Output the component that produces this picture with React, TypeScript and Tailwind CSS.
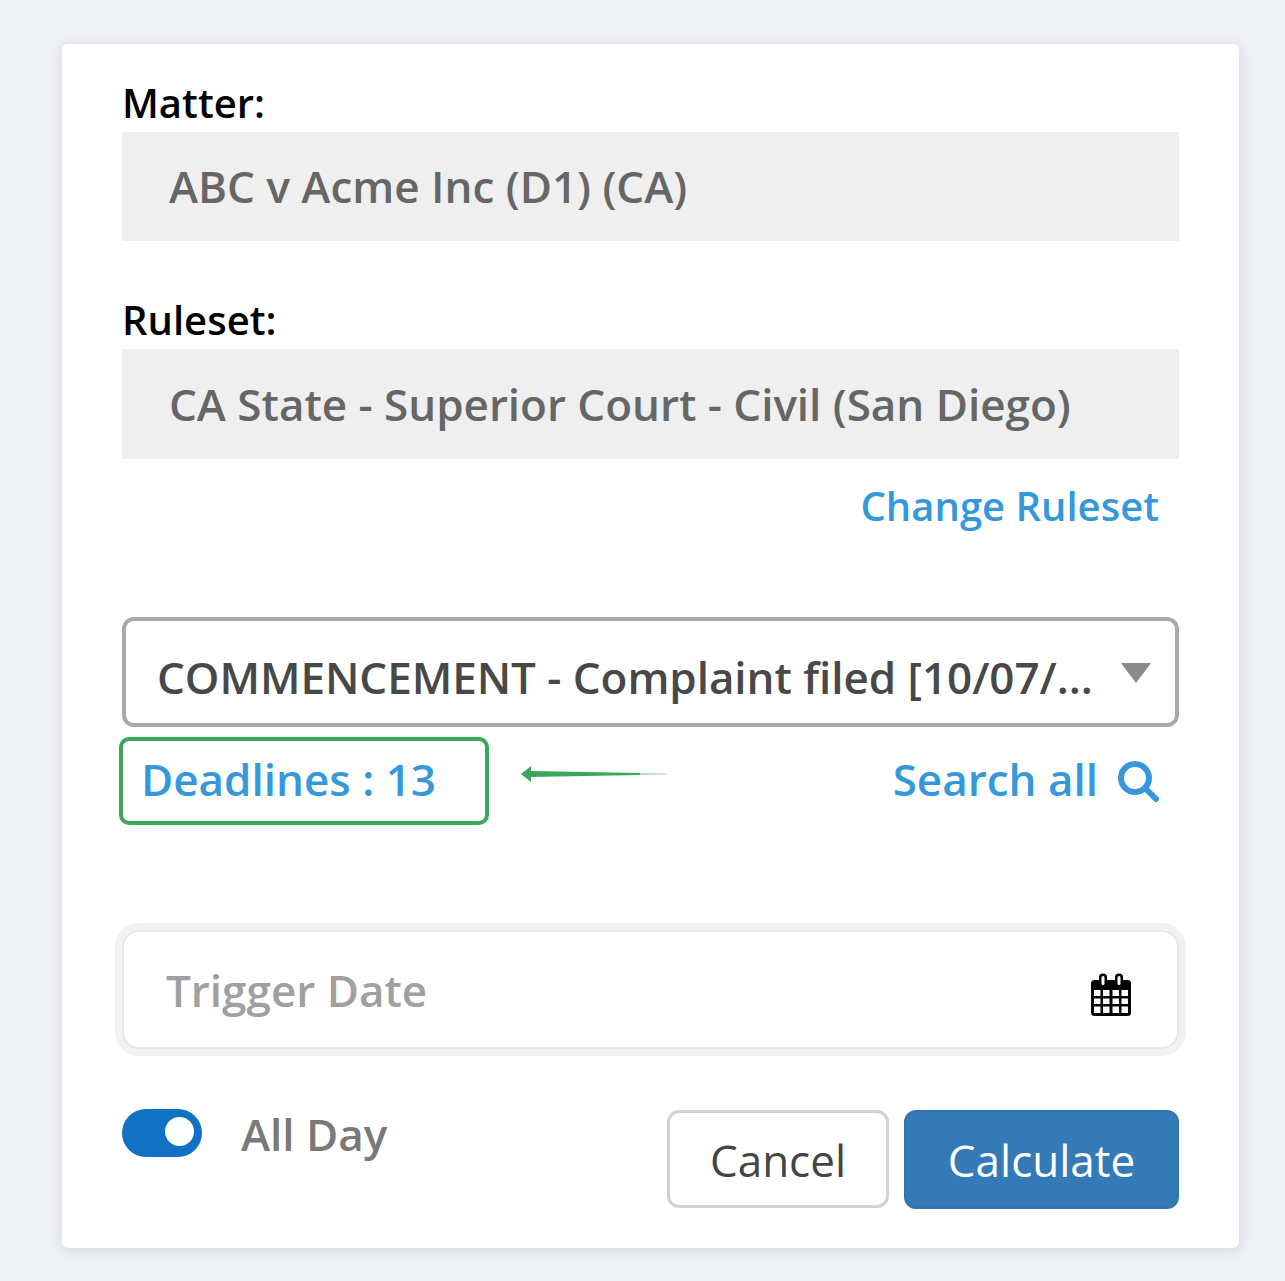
const font = { fontFamily: '"Open Sans", sans-serif' };

function CalendarIcon() {
  return (
    <svg width="42" height="44" viewBox="0 0 42 44" className="mt-[10px] shrink-0">
      <rect x="1" y="7" width="40" height="36" rx="3.5" fill="#000" />
      <rect x="9" y="0.5" width="8" height="14" rx="4" fill="#000" />
      <rect x="25" y="0.5" width="8" height="14" rx="4" fill="#000" />
      <rect x="11.5" y="3" width="3" height="9" rx="1.5" fill="#fff" />
      <rect x="27.5" y="3" width="3" height="9" rx="1.5" fill="#fff" />
      <path d="M4 17h6.5v6H4zM13 17h6.5v6H13zM22.5 17H29v6h-6.5zM31.5 17H38v6h-6.5zM4 25.5h6.5V31H4zM13 25.5h6.5V31H13zM22.5 25.5H29V31h-6.5zM31.5 25.5H38V31h-6.5zM4 33.5h6.5V40H4zM13 33.5h6.5V40H13zM22.5 33.5H29V40h-6.5zM31.5 33.5H38V40h-6.5z" fill="#fff" />
    </svg>
  );
}

function SearchIcon() {
  return (
    <svg width="41" height="41" viewBox="0 0 41 41" fill="none" stroke="#3498db" strokeWidth="6" strokeLinecap="round" className="mt-[4px]">
      <circle cx="17" cy="17" r="14" />
      <path d="M28 28l10 10" />
    </svg>
  );
}

function GreenArrow() {
  return (
    <svg width="146" height="20" viewBox="0 0 146 20" className="ml-[32px] -mt-[14px] shrink-0">
      <path d="M0 10 L10 2 V7 L119 9 V11 L10 13 V18 Z" fill="#3aa85c" />
      <path d="M119 9 L146 9.6 V10.4 L119 11 Z" fill="#3aa85c" fillOpacity="0.4" />
    </svg>
  );
}

export default function App() {
  return (
    <div className="min-h-[1281px] bg-[#eff1f5] pt-[44px] pl-[62px] pr-[46px]" style={font}>
      <div className="h-[1204px] w-[1177px] rounded-[6px] bg-white px-[60px] pt-[30px] shadow-[0_2px_14px_rgba(60,70,90,0.16)]">
        <div className="text-[40px] leading-[58px] font-semibold text-black">Matter:</div>
        <div className="flex h-[109px] items-center bg-[#efefef] pb-[2px] pl-[47px] text-[44px] font-semibold text-[#666]">
          ABC v Acme Inc (D1) (CA)
        </div>

        <div className="mt-[50px] text-[40px] leading-[58px] font-semibold text-black">Ruleset:</div>
        <div className="flex h-[110px] items-center bg-[#efefef] pl-[47px] text-[44px] font-semibold tracking-[-0.02px] text-[#666]">
          CA State - Superior Court - Civil (San Diego)
        </div>

        <div className="mt-[18px] pr-[20px] text-right text-[40px] leading-[58px] font-semibold text-[#3498db]">
          Change Ruleset
        </div>

        <div className="mt-[82px] flex h-[110px] items-center justify-between rounded-[12px] border-[4px] border-[#a9a9a9] pt-[10px] pr-[24px] pl-[31px]">
          <span className="text-[44px] font-semibold tracking-[-0.05px] text-[#484848]">COMMENCEMENT - Complaint filed [10/07/...</span>
          <span className="-mt-[8px] h-0 w-0 border-x-[15px] border-t-[20px] border-x-transparent border-t-[#8a8a8a]" />
        </div>

        <div className="mt-[10px] flex items-center">
          <div className="-ml-[3px] flex h-[88px] w-[370px] items-center rounded-[10px] border-[4px] border-[#3aa85c] pb-[4px] pl-[18px] text-[44px] font-semibold text-[#3498db]">
            Deadlines : 13
          </div>
          <GreenArrow />
          <div className="mr-[20px] ml-auto flex items-center gap-[20px] pb-[4px] text-[44px] font-semibold text-[#3498db]">
            Search all
            <SearchIcon />
          </div>
        </div>

        <div className="mt-[98px] -mr-[7px] -ml-[7px] rounded-[24px] border-[7px] border-[#f1f2f4]">
          <div className="flex h-[119px] items-center justify-between rounded-[17px] border-[2px] border-[#e6e8ec] pr-[45px] pl-[42px]">
            <span className="text-[44px] font-semibold text-[#a0a0a0]">Trigger Date</span>
            <CalendarIcon />
          </div>
        </div>

        <div className="mt-[53px] flex items-start">
          <div className="flex h-[48px] w-[80px] items-center justify-end rounded-full bg-[#1171c4] pr-[8px] pb-[3px]">
            <span className="h-[29px] w-[29px] rounded-full bg-white" />
          </div>
          <span className="-mt-[3px] ml-[39px] text-[44px] leading-[56px] font-semibold text-[#7a7878]">All Day</span>
          <button className="mt-[1px] ml-auto h-[98px] w-[222px] rounded-[12px] border-[3px] border-[#d2d2d2] bg-white pt-[2px] text-[44px] text-[#444]">
            Cancel
          </button>
          <button className="mt-[1px] ml-[15px] h-[99px] w-[275px] rounded-[12px] border-[2px] border-[#3174ae] bg-[#337ab7] text-[44px] text-white">
            Calculate
          </button>
        </div>
      </div>
    </div>
  );
}
